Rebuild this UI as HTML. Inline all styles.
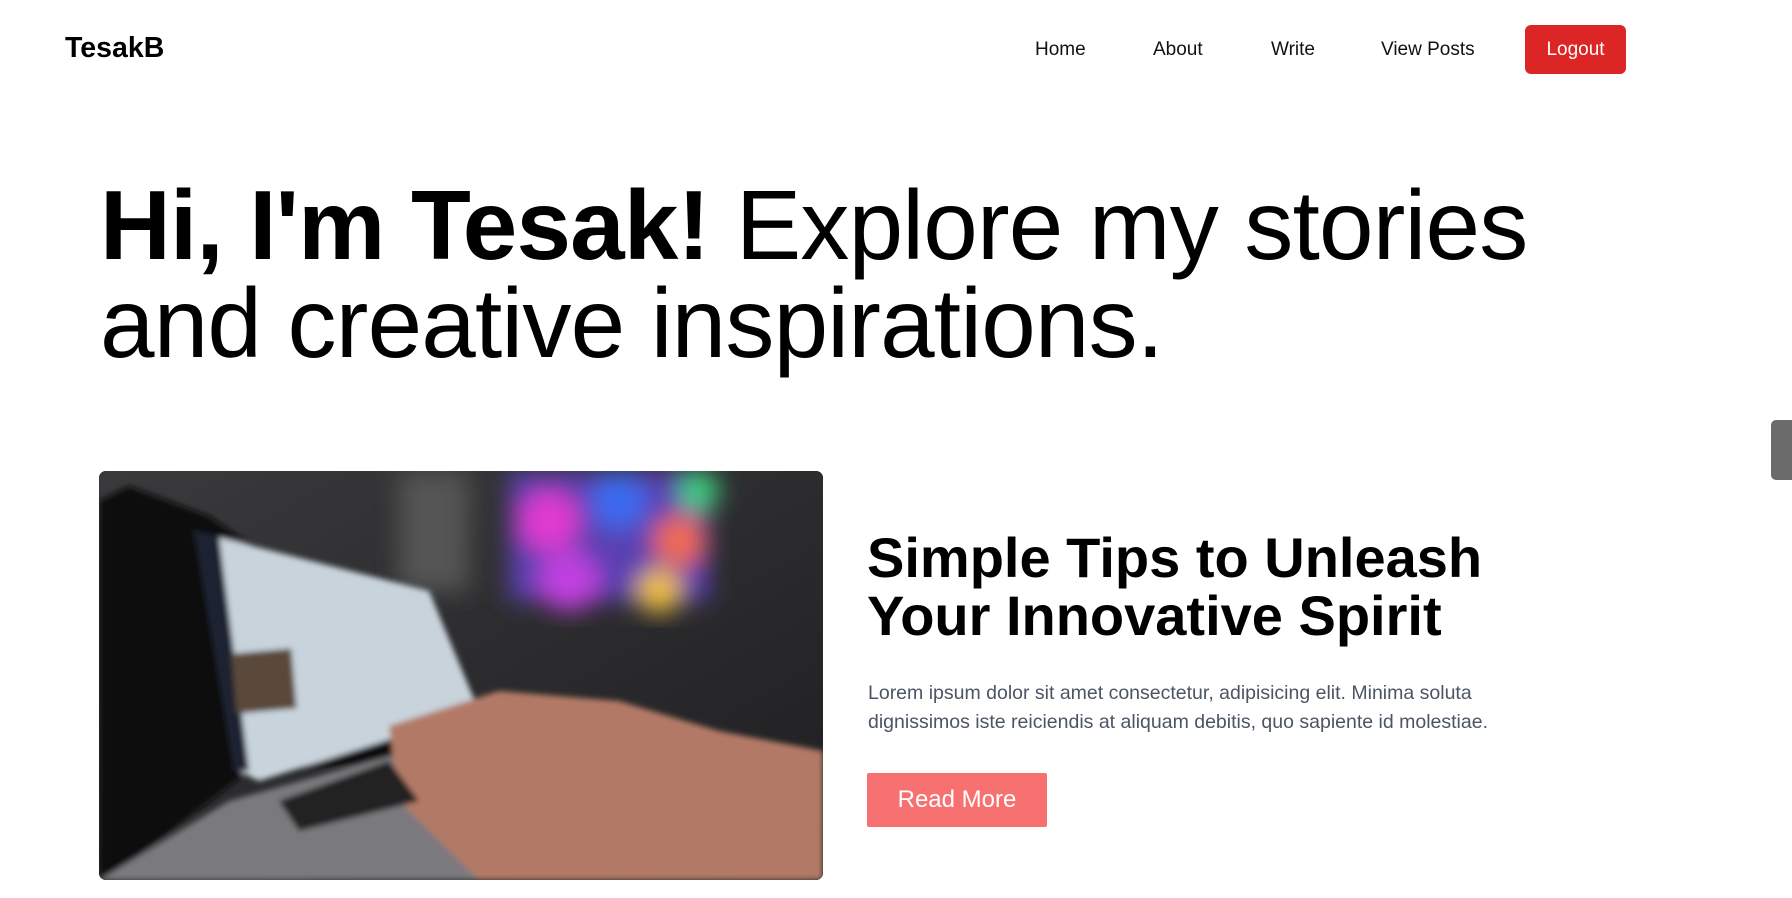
<!DOCTYPE html>
<html><head><meta charset="utf-8"><style>
*{margin:0;padding:0;box-sizing:border-box}
body{width:1792px;height:898px;background:#fff;font-family:"Liberation Sans",Arial,sans-serif;color:#000;position:relative;overflow:hidden}
.logo{position:absolute;left:65px;top:32px;font-size:28.5px;font-weight:bold}
.nav a{position:absolute;top:39px;font-size:19px;color:#111;text-decoration:none}
.logout{position:absolute;left:1525px;top:25px;width:101px;height:49px;background:#dc2626;color:#fff;border-radius:6px;font-size:19px;display:flex;align-items:center;justify-content:center}
h1{position:absolute;left:100px;top:176px;font-size:98px;font-weight:normal;line-height:98px;letter-spacing:-0.8px;width:1560px}
h1 b{font-weight:bold}
.img{position:absolute;left:99px;top:471px;width:724px;height:409px;border-radius:7px;overflow:hidden;background:#2a2a2c}
h2{position:absolute;left:867px;top:529px;font-size:56px;line-height:58px;font-weight:bold;width:700px}
p{position:absolute;left:868px;top:679px;font-size:19.5px;line-height:29px;color:#4b5563;width:660px}
.btn{position:absolute;left:867px;top:773px;width:180px;height:54px;background:#f87171;color:#fff;font-size:24px;display:flex;align-items:center;justify-content:center;border-radius:2px}
.tab{position:absolute;left:1771px;top:420px;width:21px;height:60px;background:#6b6b6b;border-radius:5px 0 0 5px}
</style></head><body>
<div class="logo">TesakB</div>
<div class="nav"><a style="left:1035px">Home</a><a style="left:1153px">About</a><a style="left:1271px">Write</a><a style="left:1381px">View Posts</a></div>
<div class="logout">Logout</div>
<h1><b>Hi, I'm Tesak!</b> Explore my stories and creative inspirations.</h1>
<div class="img">
<svg width="724" height="409" viewBox="0 0 724 409">
<defs>
<filter id="b"><feGaussianBlur stdDeviation="12"/></filter>
<filter id="b2"><feGaussianBlur stdDeviation="3"/></filter>
<linearGradient id="bg" x1="0" y1="0" x2="1" y2="1"><stop offset="0" stop-color="#3a3a3c"/><stop offset="1" stop-color="#1e1e20"/></linearGradient>
</defs>
<rect width="724" height="409" fill="url(#bg)"/>
<g filter="url(#b)">
<rect x="410" y="0" width="200" height="130" fill="#5a3fb0"/>
<circle cx="450" cy="50" r="30" fill="#e03ad0"/>
<circle cx="520" cy="30" r="28" fill="#3a6af0"/>
<circle cx="580" cy="70" r="26" fill="#f06a50"/>
<circle cx="470" cy="110" r="30" fill="#c040e0"/>
<circle cx="560" cy="120" r="22" fill="#f0c040"/>
<circle cx="600" cy="20" r="20" fill="#40d080"/>
<rect x="300" y="0" width="70" height="120" fill="#555"/>
</g>
<g filter="url(#b2)">
<polygon points="30,15 110,45 380,230 350,290 150,300 20,400 0,409 0,30" fill="#111"/>
<polygon points="95,60 330,120 380,240 160,310 140,300" fill="#c8d3dc"/>
<polygon points="95,60 120,65 150,300 135,300" fill="#1c2030"/>
<rect x="135" y="180" width="60" height="60" fill="#5a4a3a" transform="rotate(-5 165 210)"/>
<polygon points="0,409 130,330 380,260 500,409" fill="#7a7a7e"/>
<polygon points="290,255 400,220 520,230 620,260 724,280 724,409 380,409 300,330" fill="#b27a66"/>
<polygon points="180,330 290,290 320,330 200,360" fill="#222"/>
</g>
</svg>
</div>
<h2>Simple Tips to Unleash Your Innovative Spirit</h2>
<p>Lorem ipsum dolor sit amet consectetur, adipisicing elit. Minima soluta dignissimos iste reiciendis at aliquam debitis, quo sapiente id molestiae.</p>
<div class="btn">Read More</div>
<div class="tab"></div>
</body></html>
